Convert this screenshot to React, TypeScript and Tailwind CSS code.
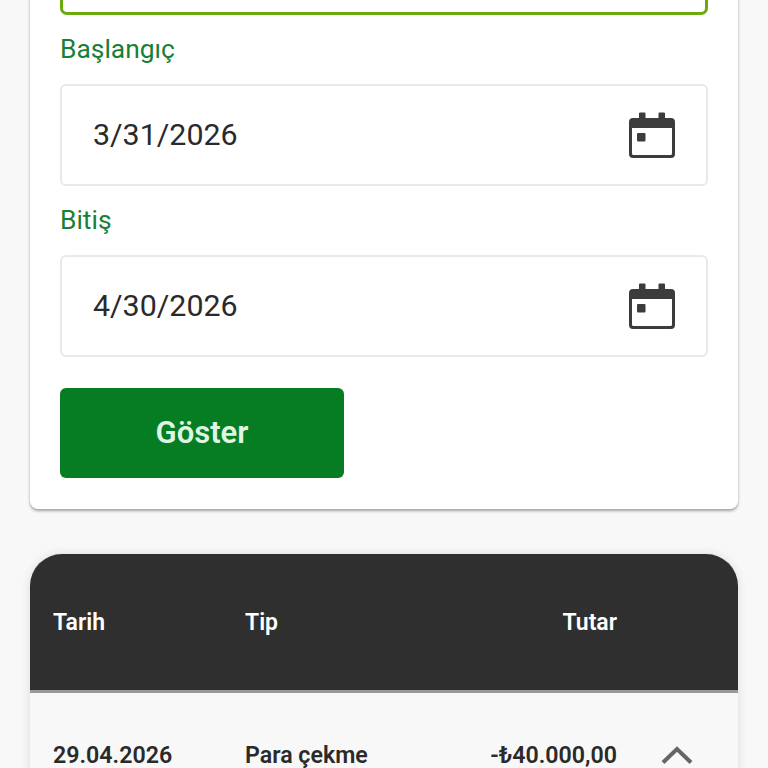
export default function App() {
  const Cal = () => (
    <svg width="48" height="48" viewBox="0 0 48 48" fill="none" className="shrink-0">
      <path fill="#3c3c3c" d="M12 1.500h4.500a1 1 0 0 1 1 1V7h13V2.500a1 1 0 0 1 1-1H36a1 1 0 0 1 1 1V7h6a4 4 0 0 1 4 4v32a4 4 0 0 1-4 4H5a4 4 0 0 1-4-4V11a4 4 0 0 1 4-4h6V2.500a1 1 0 0 1 1-1zM4 17v25.500A1.500 1.500 0 0 0 5.500 44h37a1.500 1.500 0 0 0 1.500-1.500V17z" />
      <rect x="9" y="22" width="8.500" height="8.500" rx="1" fill="#3c3c3c" />
    </svg>
  );
  const Field = ({ label, value, top }: { label: string; value: string; top: string }) => (
    <div className={top}>
      <div className="pt-[1px] text-[26.400px] leading-[33px] text-[#1a7f35]">{label}</div>
      <div className="mt-[18px] flex h-[102px] items-center justify-between rounded-[6px] border-[2px] border-[#e9e9e9] bg-white pl-[31px] pr-[30px]">
        <span className="text-[30.400px] text-[#2a2a2a]">{value}</span>
        <Cal />
      </div>
    </div>
  );
  return (
    <div className="h-[768px] overflow-hidden bg-[#f8f8f8] px-[30px] font-['Roboto',sans-serif]">
      <div className="-mt-[20px] rounded-b-[8px] bg-white px-[30px] pb-[31px] shadow-[0_2px_3px_rgba(0,0,0,0.35)]">
        <div className="h-[35px] rounded-[7px] border-[3.500px] border-[#6aaa0e]" />
        <Field label="Başlangıç" value="3/31/2026" top="mt-[17px]" />
        <Field label="Bitiş" value="4/30/2026" top="mt-[17px]" />
        <button className="mt-[31px] flex h-[90px] w-[284px] items-center justify-center rounded-[6px] bg-[#067d22] pt-[1px] text-[31px] font-semibold text-[#dff5e3]">
          Göster
        </button>
      </div>
      <div className="mt-[45px] overflow-hidden rounded-t-[32px] bg-[#f8f8f8] shadow-[0_0_8px_rgba(60,40,90,0.15)]">
        <div className="grid h-[139px] grid-cols-[216px_1fr_170px_121px] items-center border-b-[3px] border-[#999999] bg-[#2f2f2f] pt-[3px] text-[23px] font-semibold text-white">
          <div className="pl-[23px]">Tarih</div>
          <div className="-ml-[1px]">Tip</div>
          <div className="text-right">Tutar</div>
          <div />
        </div>
        <div className="grid h-[200px] grid-cols-[216px_1fr_170px_121px] pt-[45px] text-[23.200px] font-semibold text-[#2a2a2a]">
          <div className="pl-[23px]">29.04.2026</div>
          <div className="-ml-[1px]">Para çekme</div>
          <div className="whitespace-nowrap text-right">-₺40.000,00</div>
          <div className="pl-[44px] pt-[8px]">
            <svg width="32" height="18" viewBox="0 0 32 18" fill="none">
              <path d="M2 16.500 16 3l14 13.500" stroke="#666666" strokeWidth="4" />
            </svg>
          </div>
        </div>
      </div>
    </div>
  );
}
